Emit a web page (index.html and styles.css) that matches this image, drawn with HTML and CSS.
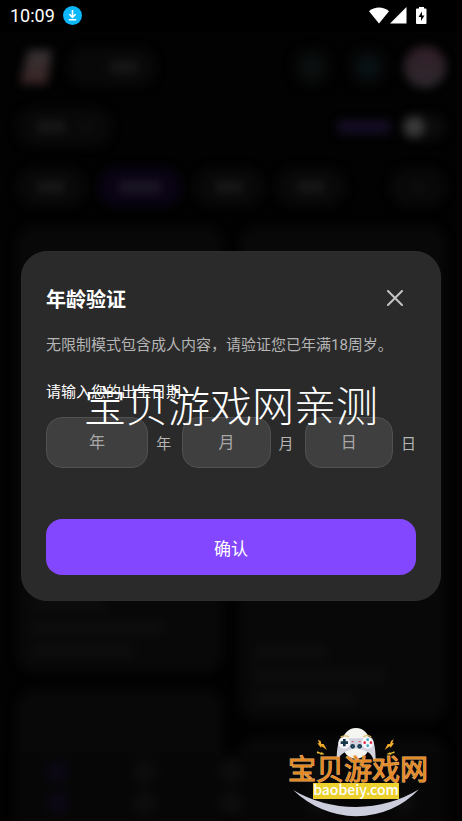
FILE: index.html
```html
<!DOCTYPE html>
<html lang="zh-CN">
<head>
  <meta charset="UTF-8">
  <meta name="viewport" content="width=device-width, initial-scale=1">
  <title>年龄验证</title>
  <link rel="stylesheet" href="styles.css">
</head>
<body>

<header class="status-bar">
  <span class="clock">10:09</span>
  <svg class="download" width="19" height="19" viewBox="0 0 19 19">
    <circle cx="9.5" cy="9.5" r="9.5" fill="#0bb8fb"/>
    <path d="M9.5 4v7M6.4 8.2l3.1 3.1 3.1-3.1M5.8 13.8h7.4" fill="none" stroke="#fff" stroke-width="1.6"/>
  </svg>
  <div class="status-icons">
    <svg width="20" height="17" viewBox="0 0 20 17">
      <path d="M0 4.3C5.600-.7 14.400-.7 20 4.300L10 16.500z" fill="#fff"/>
    </svg>
    <svg width="17" height="17" viewBox="0 0 17 17">
      <path d="M16.500 0v16.500H0z" fill="#fff"/>
    </svg>
    <svg class="battery" width="11" height="17" viewBox="0 0 11 17">
      <path d="M3 0h5v1.500h1.500q1 0 1 1V16q0 1-1 1h-8.500q-1 0-1-1V2.500q0-1 1-1H3z" fill="#fff"/>
      <path d="M6 4.500L2.500 10H5v4l3.500-5.500H6z" fill="#000"/>
    </svg>
  </div>
</header>

<main class="screen">

  <!-- Page behind the dialog -->
  <div class="app" aria-hidden="true" inert>
    <div class="top-row">
      <div class="app-logo"></div>
      <div class="pill search"><i class="word"></i></div>
      <div class="spacer"></div>
      <div class="round music"></div>
      <div class="round gem"></div>
      <div class="avatar"></div>
    </div>
    <div class="mode-row">
      <div class="pill sort"><i class="word"></i><i class="caret"></i></div>
      <div class="spacer"></div>
      <div class="mode-name"></div>
      <div class="switch"></div>
    </div>
    <div class="tab-row">
      <div class="pill"><i class="word"></i></div>
      <div class="pill active"><i class="word"></i></div>
      <div class="pill"><i class="word"></i></div>
      <div class="pill"><i class="word"></i></div>
      <div class="spacer"></div>
      <div class="pill more"><i class="caret"></i></div>
    </div>
    <div class="feed">
      <div class="column">
        <div class="card"><i class="line short"></i><i class="line"></i><i class="line medium"></i></div>
        <div class="card"></div>
      </div>
      <div class="column">
        <div class="card tall"><i class="line short"></i><i class="line"></i><i class="line medium"></i></div>
        <div class="card"></div>
      </div>
    </div>
    <div class="bottom-nav">
      <div class="nav-item current"></div>
      <div class="nav-item"></div>
      <div class="nav-item"></div>
      <div class="nav-item"></div>
      <div class="nav-item"></div>
    </div>
  </div>

  <!-- Modal -->
  <div class="overlay">
    <form class="modal" role="dialog" aria-labelledby="modalTitle">
      <div class="modal-header">
        <h1 id="modalTitle">年龄验证</h1>
        <button type="button" class="close" aria-label="关闭">
          <svg width="16" height="16" viewBox="0 0 16 16">
            <path d="M1 1l14 14M15 1l-14 14" stroke="#c4c4c4" stroke-width="2" stroke-linecap="round"/>
          </svg>
        </button>
      </div>
      <p class="notice">无限制模式包含成人内容，请验证您已年满18周岁。</p>
      <p class="birth-title">请输入您的出生日期</p>
      <div class="birth">
        <div class="field">
          <input type="text" id="year" inputmode="numeric" maxlength="4" placeholder="年">
          <label for="year">年</label>
        </div>
        <div class="field">
          <input type="text" id="month" inputmode="numeric" maxlength="2" placeholder="月">
          <label for="month">月</label>
        </div>
        <div class="field">
          <input type="text" id="day" inputmode="numeric" maxlength="2" placeholder="日">
          <label for="day">日</label>
        </div>
      </div>
      <button type="button" class="confirm">确认</button>
      <div class="watermark">宝贝游戏网亲测</div>
    </form>
  </div>

  <!-- Site badge -->
  <svg class="site-badge" width="160" height="101" viewBox="0 0 160 101" role="img" aria-label="宝贝游戏网 baobeiy.com">
    <svg width="160" height="101" viewBox="0 0 480 303">
      <path d="M39 210Q120 286 228 289Q342 287 417 208Q332 260 228 261Q126 261 39 210z" fill="#cdcedd"/>
      <ellipse cx="228" cy="70" rx="42" ry="46" fill="#f5f5f2"/>
      <path d="M170 123C170 100 172 74 178 62Q184 52 199 53L214 55H243L258 53Q273 52 279 62C285 74 287 100 287 123L281 119Q272 96 256 93Q229 78 201 93Q184 99 170 123z" fill="#d2d3df"/>
      <path d="M182 52Q190 44 207 50M250 50Q266 43 274 52" fill="none" stroke="#dfbe62" stroke-width="4"/>
      <circle cx="193" cy="68" r="18" fill="#f6f6fa"/>
      <circle cx="263" cy="68" r="18" fill="#f6f6fa"/>
      <path d="M193 57v22M182 68h22" stroke="#17384a" stroke-width="8"/>
      <circle cx="263" cy="59" r="4" fill="#35a7c5"/>
      <circle cx="263" cy="77" r="4" fill="#35a7c5"/>
      <circle cx="254" cy="68" r="4" fill="#e52d4a"/>
      <circle cx="273" cy="68" r="4" fill="#e52d4a"/>
      <circle cx="218" cy="79" r="7" fill="#17384a"/>
      <circle cx="239" cy="79" r="7" fill="#17384a"/>
      <circle cx="218" cy="79" r="2" fill="#478593"/>
      <circle cx="239" cy="79" r="2" fill="#478593"/>
      <path d="M215 65h6M236 65h6" stroke="#d84e69" stroke-width="3"/>
      <path d="M114 59L122 63 124 72 131 72 141 90 125 79 123 83 112 70 117 70z" fill="#efac29"/>
      <path d="M341 58L333 63 330 72 323 72 314 90 329 79 332 83 342 70 337 69z" fill="#efac29"/>
      <path d="M112 94L124 99 123 95 134 103 121 104 121 101 110 100zM343 94L330 99 331 96 319 103 334 104 334 101 344 99z" fill="#e9bd35"/>
    </svg>
    <rect x="33" y="63" width="86" height="16" fill="#ecd02d"/>
    <text class="badge-name" x="8" y="60">宝贝游戏网</text>
    <text class="badge-url" x="76" y="75" text-anchor="middle">baobeiy.com</text>
  </svg>
</main>

</body>
</html>
```
FILE: styles.css
```css
* {
  box-sizing: border-box;
}

body {
  margin: 0;
  min-height: 100vh;
  display: flex;
  flex-direction: column;
  background: #000;
  color: #fff;
  font-family: Roboto, "Noto Sans CJK SC", sans-serif;
}

h1, p {
  margin: 0;
}

/* Status bar */
.status-bar {
  display: flex;
  align-items: center;
  height: 31px;
  padding: 0 35px 0 10px;
  gap: 8px;
}

.clock {
  font-size: 18px;
}

.status-icons {
  display: flex;
  gap: 1px;
  margin-left: auto;
}

.battery {
  margin-left: 8px;
}

.screen {
  position: relative;
  flex: 1;
  display: flex;
  overflow: hidden;
  background: #020202;
}

/* Page behind the dialog, blurred */
.app {
  position: absolute;
  inset: 0;
  display: flex;
  flex-direction: column;
  gap: 16px;
  padding: 14px 16px 0;
  filter: blur(5px);
}

.top-row, .mode-row, .tab-row {
  display: flex;
  align-items: center;
  height: 44px;
}

.top-row {
  gap: 16px;
}

.mode-row, .tab-row {
  gap: 12px;
}

.spacer {
  flex: 1;
}

.app-logo {
  width: 32px;
  height: 34px;
  margin-left: 4px;
  background: linear-gradient(#363234, #3a2425);
  clip-path: polygon(25% 0, 100% 0, 85% 100%, 0 100%);
}

.pill {
  display: flex;
  align-items: center;
  justify-content: center;
  gap: 16px;
  width: 70px;
  height: 40px;
  border-radius: 20px;
  background: #080808;
}

.word {
  width: 28px;
  height: 12px;
  background: #171717;
}

.caret {
  width: 10px;
  height: 6px;
  background: #121212;
}

.search {
  width: 88px;
  padding-left: 24px;
}

.sort {
  width: 96px;
}

.active {
  width: 84px;
  background: #090313;
}

.active .word {
  width: 42px;
  background: #1c1725;
}

.more {
  width: 56px;
}

.round {
  width: 40px;
  height: 40px;
  border-radius: 50%;
}

.music {
  background: radial-gradient(#0c1313, #060606 60%);
}

.gem {
  background: radial-gradient(#08161a, #060606 60%);
}

.avatar {
  width: 42px;
  height: 42px;
  border-radius: 50%;
  background: linear-gradient(#321e28, #2b282c);
}

.mode-name {
  width: 52px;
  height: 14px;
  background: #150d24;
}

.switch {
  width: 44px;
  height: 26px;
  border-radius: 13px;
  background: radial-gradient(circle at 12px 13px, #3a3a3a 10px, #0b0b0b 11px);
}

.feed {
  flex: 1;
  display: flex;
  gap: 16px;
  min-height: 0;
}

.column {
  flex: 1;
  display: flex;
  flex-direction: column;
  gap: 16px;
}

.card {
  display: flex;
  flex-direction: column;
  flex: none;
  justify-content: flex-end;
  gap: 10px;
  height: 448px;
  padding: 16px;
  border-radius: 20px;
  background: #080808;
}

.tall {
  height: 496px;
}

.line {
  width: 130px;
  height: 13px;
  background: #0d0d0d;
}

.short {
  width: 70px;
}

.medium {
  width: 100px;
}

.bottom-nav {
  position: absolute;
  left: 14px;
  right: 14px;
  bottom: 0;
  display: flex;
  height: 66px;
  background: #060606;
}

.nav-item {
  flex: 1;
  background: radial-gradient(circle at 50% 25%, #0d0d0d 8px, transparent 14px),
    radial-gradient(circle at 50% 72%, #0d0d0d 8px, transparent 14px);
}

.current {
  background: radial-gradient(circle at 50% 25%, #0b0714 8px, transparent 14px),
    radial-gradient(circle at 50% 72%, #0b0714 8px, transparent 14px);
}

/* Modal */
.overlay {
  position: relative;
  flex: 1;
  min-width: 0;
  display: flex;
  align-items: center;
  justify-content: center;
  padding: 21px;
}

.modal {
  position: relative;
  width: 100%;
  min-width: 0;
  max-width: 480px;
  padding: 25px 24px;
  border: 1px solid #2d2d2d;
  border-radius: 26px;
  background: #2a2a2a;
}

.modal-header {
  display: flex;
  align-items: center;
  justify-content: space-between;
  height: 42px;
}

h1 {
  font-size: 20px;
  font-weight: 700;
}

.close {
  display: flex;
  align-items: center;
  justify-content: center;
  width: 42px;
  height: 42px;
  padding: 0;
  border: 0;
  background: none;
  cursor: pointer;
}

.notice, .birth-title {
  font-size: 15px;
  line-height: 25px;
}

.notice {
  margin-top: 14px;
  color: #b5b5b5;
}

.birth-title {
  margin-top: 22px;
}

.birth {
  display: grid;
  grid-template-columns: minmax(0, 9fr) minmax(0, 8fr) minmax(0, 8fr);
  gap: 11px;
  margin-top: 12px;
}

.field {
  display: flex;
  align-items: center;
  gap: 8px;
  color: #b5b5b5;
  font-size: 15px;
}

.field input {
  flex: 1;
  min-width: 0;
  height: 51px;
  padding: 0 12px;
  border: 1px solid #515151;
  border-radius: 16px;
  background: #3f3f3f;
  color: #fff;
  font-family: inherit;
  font-size: 16px;
  text-align: center;
}

.field input::placeholder {
  color: #a8a8a8;
}

.confirm {
  display: block;
  width: 100%;
  height: 56px;
  margin-top: 51px;
  border: 0;
  border-radius: 16px;
  background: #8347ff;
  color: #fff;
  font-family: inherit;
  font-size: 17px;
  cursor: pointer;
}

/* Marks laid over the page */
.watermark {
  position: absolute;
  top: 122px;
  left: 0;
  right: 0;
  font-family: "Noto Sans CJK SC", sans-serif;
  font-size: 42px;
  font-weight: 300;
  line-height: 60px;
  text-align: center;
  white-space: nowrap;
  pointer-events: none;
}

.site-badge {
  position: absolute;
  right: 22px;
  bottom: 0;
}

.badge-name {
  fill: #e58a24;
  stroke: #f0b673;
  stroke-width: 1px;
  paint-order: stroke;
  font-family: "Noto Sans CJK SC", sans-serif;
  font-size: 28px;
  font-weight: 400;
}

.badge-url {
  fill: #fff;
  font-family: "Noto Sans CJK SC", sans-serif;
  font-size: 14px;
  font-weight: 500;
}
```
